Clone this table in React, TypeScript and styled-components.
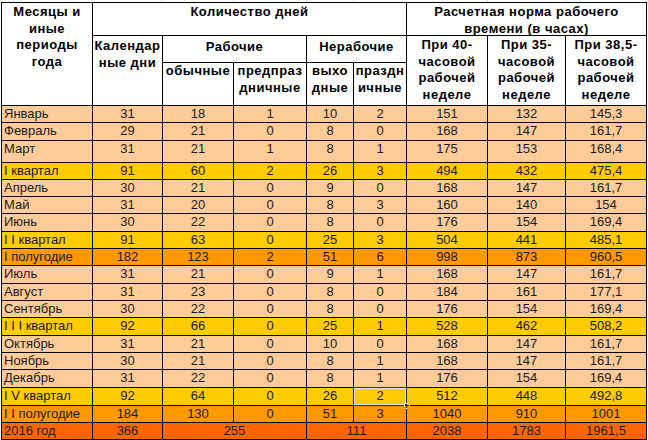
import React from "react";
import styled, { createGlobalStyle } from "styled-components";

type Tone = "month" | "quarter" | "half" | "year";

const GlobalStyle = createGlobalStyle`
  html, body {
    margin: 0;
    padding: 0;
    background: #fff;
  }
  body {
    font-family: "Liberation Sans", Arial, sans-serif;
  }
`;

const COLUMNS = "90px 69px 70px 72px 46px 52px 80px 77px 80px";
// row heights of the body rows, Март is the tall one
const BODY_ROWS = [16, 17, 21, 16, 16, 16, 17, 16, 16, 17, 16, 16, 17, 16, 16, 17, 17, 16, 16];

const tones: Record<Tone, string> = {
  month: "#ffcc99",
  quarter: "#ffcc00",
  half: "#ff9900",
  year: "#ff6600",
};

const Sheet = styled.div`
  width: 648px;
  height: 440px;
  overflow: hidden;
  background: #fff;
`;

// the empty spreadsheet row peeking above the table
const GridAbove = styled.div`
  display: grid;
  grid-template-columns: ${COLUMNS};
  column-gap: 1px;
  padding: 0 1px;
  margin-left: 1px;
  width: max-content;
  height: 2px;
  background: #d6d6d6;

  & > span {
    background: #fff;
  }
`;

const Table = styled.div`
  display: grid;
  grid-template-columns: ${COLUMNS};
  grid-template-rows: 32px 26px 42px ${BODY_ROWS.map((h) => `${h}px`).join(" ")};
  gap: 1px;
  padding: 1px;
  margin-left: 1px;
  width: max-content;
  background: #000;
`;

const Head = styled.div<{ $col: string; $row: string; $pad?: number }>`
  grid-column: ${(p) => p.$col};
  grid-row: ${(p) => p.$row};
  background: #fff;
  color: #000;
  font-weight: bold;
  font-size: 13px;
  line-height: 16.5px;
  letter-spacing: 0.5px;
  text-align: center;
  padding-top: ${(p) => p.$pad ?? 1}px;
  white-space: nowrap;
  overflow: hidden;
`;

const Cell = styled.div<{ $tone: Tone; $span?: number; $label?: boolean }>`
  grid-column: span ${(p) => p.$span ?? 1};
  position: relative;
  background: ${(p) => tones[p.$tone]};
  color: #1a1a1a;
  font-size: 13px;
  line-height: 16px;
  text-align: ${(p) => (p.$label ? "left" : "center")};
  padding-left: ${(p) => (p.$label ? "2px" : "0")};
  white-space: nowrap;
`;

const Selection = styled.span`
  position: absolute;
  inset: -1px;
  border: 1px solid #1f2f52;
  box-shadow: inset 0 0 0 1px #dfe4ee;
  pointer-events: none;

  &::after {
    content: "";
    position: absolute;
    right: -4px;
    bottom: -4px;
    width: 4px;
    height: 4px;
    background: #1f2f52;
    border: 1px solid #fff;
  }
`;

type Row = {
  label: string;
  tone: Tone;
  values: (string | number)[];
  spans?: number[];
  selected?: number;
};

const rows: Row[] = [
  { label: "Январь", tone: "month", values: [31, 18, 1, 10, 2, 151, 132, "145,3"] },
  { label: "Февраль", tone: "month", values: [29, 21, 0, 8, 0, 168, 147, "161,7"] },
  { label: "Март", tone: "month", values: [31, 21, 1, 8, 1, 175, 153, "168,4"] },
  { label: "I квартал", tone: "quarter", values: [91, 60, 2, 26, 3, 494, 432, "475,4"] },
  { label: "Апрель", tone: "month", values: [30, 21, 0, 9, 0, 168, 147, "161,7"] },
  { label: "Май", tone: "month", values: [31, 20, 0, 8, 3, 160, 140, "154"] },
  { label: "Июнь", tone: "month", values: [30, 22, 0, 8, 0, 176, 154, "169,4"] },
  { label: "I I квартал", tone: "quarter", values: [91, 63, 0, 25, 3, 504, 441, "485,1"] },
  { label: "I полугодие", tone: "half", values: [182, 123, 2, 51, 6, 998, 873, "960,5"] },
  { label: "Июль", tone: "month", values: [31, 21, 0, 9, 1, 168, 147, "161,7"] },
  { label: "Август", tone: "month", values: [31, 23, 0, 8, 0, 184, 161, "177,1"] },
  { label: "Сентябрь", tone: "month", values: [30, 22, 0, 8, 0, 176, 154, "169,4"] },
  { label: "I I I квартал", tone: "quarter", values: [92, 66, 0, 25, 1, 528, 462, "508,2"] },
  { label: "Октябрь", tone: "month", values: [31, 21, 0, 10, 0, 168, 147, "161,7"] },
  { label: "Ноябрь", tone: "month", values: [30, 21, 0, 8, 1, 168, 147, "161,7"] },
  { label: "Декабрь", tone: "month", values: [31, 22, 0, 8, 1, 176, 154, "169,4"] },
  { label: "I V квартал", tone: "quarter", values: [92, 64, 0, 26, 2, 512, 448, "492,8"], selected: 4 },
  { label: "I I полугодие", tone: "half", values: [184, 130, 0, 51, 3, 1040, 910, "1001"] },
  {
    label: "2016 год",
    tone: "year",
    values: [366, 255, 111, 2038, 1783, "1961,5"],
    spans: [1, 2, 2, 1, 1, 1],
  },
];

const Br = () => <br />;

export default function App() {
  return (
    <Sheet>
      <GlobalStyle />
      <GridAbove>
        {Array.from({ length: 9 }, (_, i) => (
          <span key={i} />
        ))}
      </GridAbove>
      <Table>
        <Head $col="1" $row="1 / 4">
          Месяцы и<Br />иные<Br />периоды<Br />года
        </Head>
        <Head $col="2 / 7" $row="1">
          Количество дней
        </Head>
        <Head $col="7 / 10" $row="1">
          Расчетная норма рабочего<Br />времени (в часах)
        </Head>
        <Head $col="2" $row="2 / 4" $pad={2}>
          Календар<Br />ные дни
        </Head>
        <Head $col="3 / 5" $row="2" $pad={3}>
          Рабочие
        </Head>
        <Head $col="5 / 7" $row="2" $pad={3}>
          Нерабочие
        </Head>
        <Head $col="3" $row="3" $pad={0}>
          обычные
        </Head>
        <Head $col="4" $row="3" $pad={0}>
          предпраз<Br />дничные
        </Head>
        <Head $col="5" $row="3" $pad={0}>
          выхо<Br />дные
        </Head>
        <Head $col="6" $row="3" $pad={0}>
          праздн<Br />ичные
        </Head>
        <Head $col="7" $row="2 / 4">
          При 40-<Br />часовой<Br />рабочей<Br />неделе
        </Head>
        <Head $col="8" $row="2 / 4">
          При 35-<Br />часовой<Br />рабочей<Br />неделе
        </Head>
        <Head $col="9" $row="2 / 4">
          При 38,5-<Br />часовой<Br />рабочей<Br />неделе
        </Head>

        {rows.map((row) => (
          <React.Fragment key={row.label}>
            <Cell $tone={row.tone} $label>
              {row.label}
            </Cell>
            {row.values.map((v, i) => (
              <Cell key={i} $tone={row.tone} $span={row.spans?.[i]}>
                {v}
                {row.selected === i && <Selection />}
              </Cell>
            ))}
          </React.Fragment>
        ))}
      </Table>
    </Sheet>
  );
}
